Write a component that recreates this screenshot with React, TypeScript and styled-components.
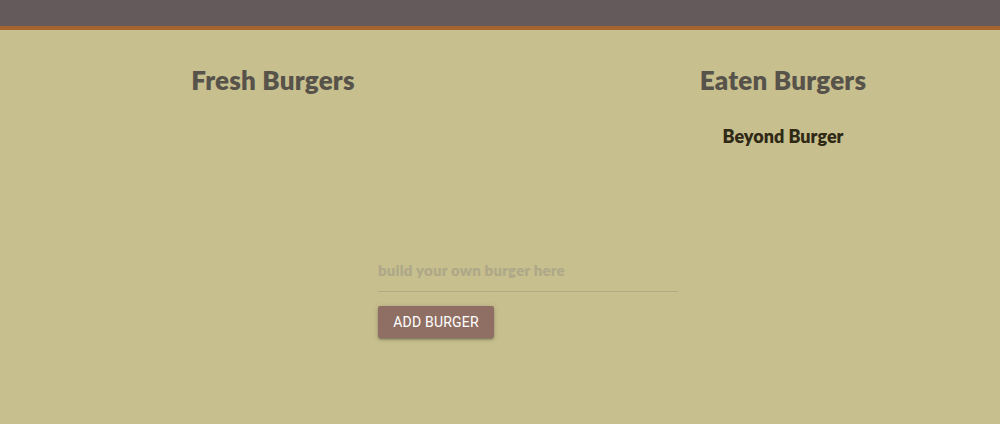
import styled, { createGlobalStyle } from "styled-components";

const GlobalStyle = createGlobalStyle`
    html, body {
        margin: 0;
        padding: 0;
        background-color: #c7bf8e;
        font-family: "Lato", "Liberation Sans", sans-serif;
    }
`;

const Page = styled.div`
    min-height: 424px;
    background-color: #c7bf8e;
`;

const NavBar = styled.nav`
    height: 26px;
    background-color: #655a5b;
    border-bottom: 4px solid #a5632f;
`;

const Columns = styled.div`
    display: grid;
    grid-template-columns: 546px 434px;
    column-gap: 20px;
`;

const Column = styled.section`
    display: flex;
    flex-direction: column;
    align-items: center;
`;

const Title = styled.h2`
    margin: 35px 0 0;
    font-size: 26px;
    line-height: 30px;
    font-weight: 800;
    color: #57534a;
    letter-spacing: 0.2px;
`;

const BurgerList = styled.ul`
    list-style: none;
    margin: 29px 0 0;
    padding: 0;
`;

const BurgerItem = styled.li`
    font-size: 18px;
    line-height: 24px;
    font-weight: 800;
    color: #2f2915;
    text-align: center;
`;

const Form = styled.form`
    width: 300px;
    margin: 100px 0 0 378px;
    display: flex;
    flex-direction: column;
    align-items: flex-start;
`;

const Input = styled.input`
    width: 100%;
    box-sizing: border-box;
    height: 44px;
    padding: 0;
    border: none;
    border-bottom: 1px solid #b0aa88;
    background: transparent;
    font-family: "Lato", sans-serif;
    font-size: 15px;
    font-weight: 800;
    letter-spacing: 0.2px;
    color: #57534a;
    outline: none;
    &::placeholder {
        color: #aea888;
    }
`;

const Button = styled.button`
    margin-top: 14px;
    height: 32px;
    width: 116px;
    border: none;
    border-radius: 2px;
    background-color: #8f6f64;
    color: #ffffff;
    font-family: "Roboto", "Liberation Sans", sans-serif;
    font-size: 14px;
    letter-spacing: 0.2px;
    text-transform: uppercase;
    box-shadow: 0 2px 2px 0 rgba(0, 0, 0, 0.14), 0 3px 1px -2px rgba(0, 0, 0, 0.12), 0 1px 5px 0 rgba(0, 0, 0, 0.2);
    cursor: pointer;
`;

const eaten = ["Beyond Burger"];

function App() {
    return (
        <Page>
            <GlobalStyle />
            <NavBar />
            <Columns>
                <Column>
                    <Title>Fresh Burgers</Title>
                </Column>
                <Column>
                    <Title>Eaten Burgers</Title>
                    <BurgerList>
                        {eaten.map((name) => (
                            <BurgerItem key={name}>{name}</BurgerItem>
                        ))}
                    </BurgerList>
                </Column>
            </Columns>
            <Form onSubmit={(e) => e.preventDefault()}>
                <Input placeholder="build your own burger here" />
                <Button type="submit">Add Burger</Button>
            </Form>
        </Page>
    );
}

export default App;
